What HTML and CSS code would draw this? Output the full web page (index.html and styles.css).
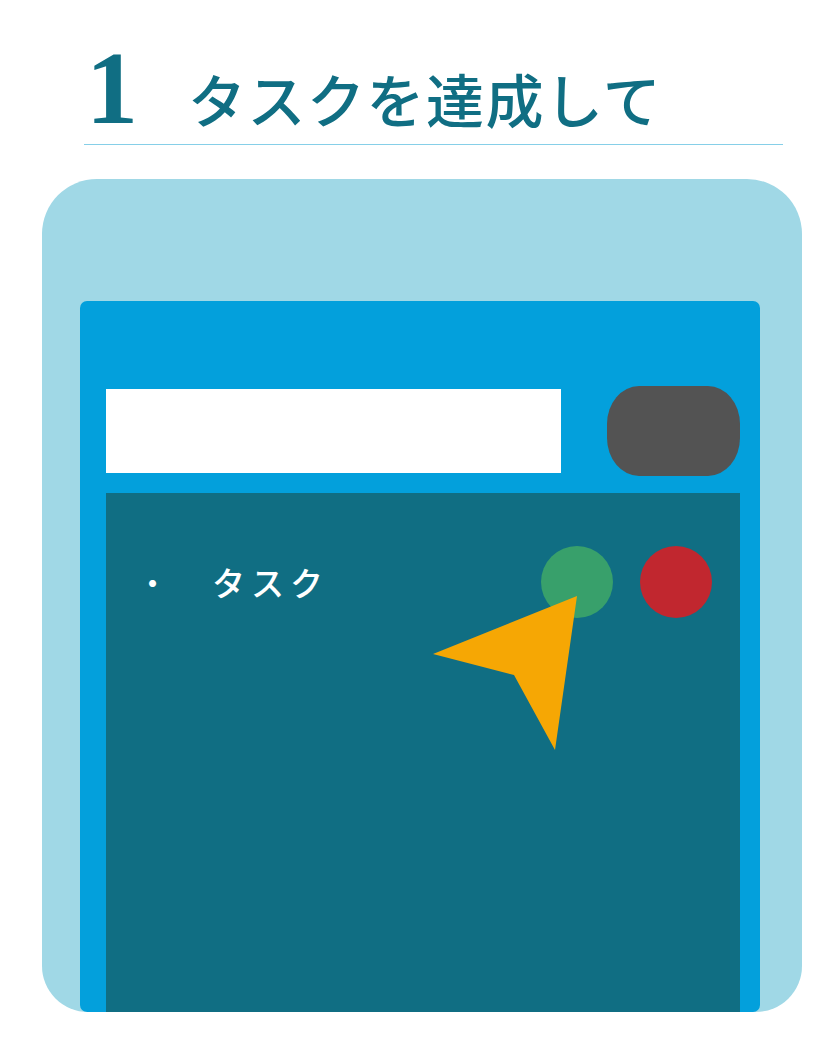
FILE: index.html
```html
<!DOCTYPE html>
<html lang="ja">
<head>
<meta charset="utf-8">
<link rel="stylesheet" href="styles.css">
</head>
<body>
<header class="heading">
  <span class="num">1</span>
  <h1 class="title">タスクを達成して</h1>
</header>
<section class="card">
  <div class="app">
    <div class="form-row">
      <div class="input"></div>
      <div class="button"></div>
    </div>
    <div class="list">
      <div class="item">
        <span class="bullet">・</span>
        <span class="label">タスク</span>
        <span class="dot done"></span>
        <span class="dot remove"></span>
      </div>
      <svg class="cursor" width="160" height="160" viewBox="0 0 160 160">
        <polygon points="144,3 0,61 81,82 122,157" fill="#f6a704"/>
      </svg>
    </div>
  </div>
</section>
</body>
</html>
```
FILE: styles.css
```css
* { box-sizing: border-box; }
body {
  margin: 0;
  background: #ffffff;
  width: 834px;
  height: 1049px;
  overflow: hidden;
}
.heading {
  display: flex;
  align-items: baseline;
  margin: 0 51px 0 84px;
  padding: 11px 0 0 2px;
  height: 145px;
  border-bottom: 1.5px solid #86cfe8;
  color: #106e83;
}
.num {
  font-family: "Liberation Serif", serif;
  font-weight: 700;
  font-size: 104px;
  line-height: 125px;
  padding-top: 14px;
  width: 102px;
}
.title {
  margin: 0;
  font-family: "Noto Sans CJK JP", sans-serif;
  font-weight: 500;
  font-size: 58px;
  letter-spacing: 1.5px;
  line-height: 1;
}
.card {
  margin: 34px 0 0 42px;
  width: 760px;
  height: 833px;
  background: #a0d8e6;
  border-radius: 55px 55px 46px 46px;
  padding: 122px 42px 0 38px;
  overflow: hidden;
}
.app {
  height: 711px;
  background: #03a0dc;
  border-radius: 7px;
  padding: 85px 20px 0 26px;
  display: flex;
  flex-direction: column;
}
.form-row {
  display: flex;
  align-items: center;
  justify-content: space-between;
  height: 90px;
}
.input {
  width: 455px;
  height: 84px;
  background: #ffffff;
}
.button {
  width: 133px;
  height: 90px;
  background: #535353;
  border-radius: 32px / 38px;
}
.list {
  position: relative;
  margin-top: 17px;
  flex: 1;
  background: #106e83;
  padding: 53px 28px 0 40px;
}
.item {
  display: flex;
  align-items: center;
  height: 72px;
  color: #ffffff;
  font-family: "Noto Sans CJK JP", sans-serif;
  font-size: 33px;
}
.bullet {
  width: 76px;
  margin-left: -10px;
}
.label {
  flex: 1;
  font-weight: 500;
  letter-spacing: 6px;
}
.dot {
  width: 72px;
  height: 72px;
  border-radius: 50%;
}
.done { background: #38a06b; }
.remove { background: #c1272f; margin-left: 27px; }
.cursor {
  position: absolute;
  left: 327px;
  top: 100px;
}
```
